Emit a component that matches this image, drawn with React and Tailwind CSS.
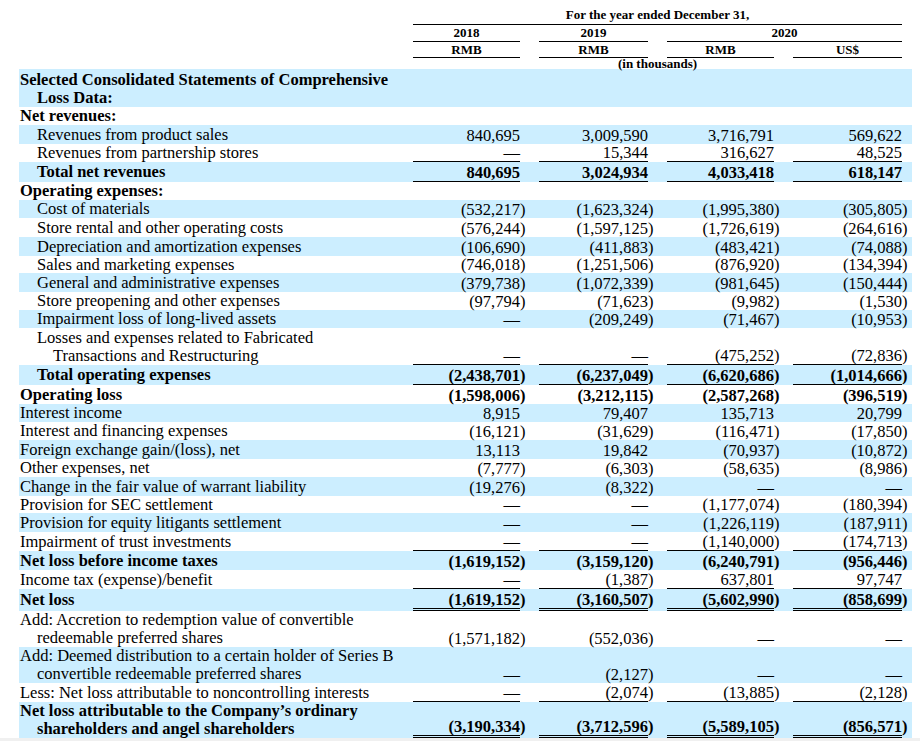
import React from "react";

const W = ["w-[107px]", "w-[109px]", "w-[107px]", "w-[109px]"];
const P = ["w-[19px]", "w-[19px]", "w-[19px]", "w-[10px]"];
const IND = ["pl-[1px]", "pl-[18px]", "pl-[34px]"];

const rows = [
  { l: [["Selected Consolidated Statements of Comprehensive", 0], ["Loss Data:", 1]], b: true, h: "h-[38px]", end: true },
  { l: [["Net revenues:", 0]], b: true, h: "h-[18px]" },
  { l: [["Revenues from product sales", 1]], h: "h-[19px]", v: ["840,695", "3,009,590", "3,716,791", "569,622"] },
  { l: [["Revenues from partnership stores", 1]], h: "h-[18px]", v: ["—", "15,344", "316,627", "48,525"], u: 1 },
  { l: [["Total net revenues", 1]], b: true, vb: true, h: "h-[20px]", v: ["840,695", "3,024,934", "4,033,418", "618,147"], u: 1 },
  { l: [["Operating expenses:", 0]], b: true, h: "h-[18px]" },
  { l: [["Cost of materials", 1]], h: "h-[18px]", v: ["(532,217)", "(1,623,324)", "(1,995,380)", "(305,805)"] },
  { l: [["Store rental and other operating costs", 1]], h: "h-[19px]", v: ["(576,244)", "(1,597,125)", "(1,726,619)", "(264,616)"] },
  { l: [["Depreciation and amortization expenses", 1]], h: "h-[19px]", v: ["(106,690)", "(411,883)", "(483,421)", "(74,088)"] },
  { l: [["Sales and marketing expenses", 1]], h: "h-[17px]", v: ["(746,018)", "(1,251,506)", "(876,920)", "(134,394)"] },
  { l: [["General and administrative expenses", 1]], h: "h-[19px]", v: ["(379,738)", "(1,072,339)", "(981,645)", "(150,444)"] },
  { l: [["Store preopening and other expenses", 1]], h: "h-[18px]", v: ["(97,794)", "(71,623)", "(9,982)", "(1,530)"] },
  { l: [["Impairment loss of long-lived assets", 1]], h: "h-[18px]", v: ["—", "(209,249)", "(71,467)", "(10,953)"] },
  { l: [["Losses and expenses related to Fabricated", 1], ["Transactions and Restructuring", 2]], h: "h-[37px]", v: ["—", "—", "(475,252)", "(72,836)"], u: 1 },
  { l: [["Total operating expenses", 1]], b: true, vb: true, h: "h-[20px]", v: ["(2,438,701)", "(6,237,049)", "(6,620,686)", "(1,014,666)"], u: 1 },
  { l: [["Operating loss", 0]], b: true, vb: true, h: "h-[19px]", v: ["(1,598,006)", "(3,212,115)", "(2,587,268)", "(396,519)"] },
  { l: [["Interest income", 0]], h: "h-[18px]", v: ["8,915", "79,407", "135,713", "20,799"] },
  { l: [["Interest and financing expenses", 0]], h: "h-[18px]", v: ["(16,121)", "(31,629)", "(116,471)", "(17,850)"] },
  { l: [["Foreign exchange gain/(loss), net", 0]], h: "h-[19px]", v: ["13,113", "19,842", "(70,937)", "(10,872)"] },
  { l: [["Other expenses, net", 0]], h: "h-[18px]", v: ["(7,777)", "(6,303)", "(58,635)", "(8,986)"] },
  { l: [["Change in the fair value of warrant liability", 0]], h: "h-[19px]", v: ["(19,276)", "(8,322)", "—", "—"] },
  { l: [["Provision for SEC settlement", 0]], h: "h-[17px]", v: ["—", "—", "(1,177,074)", "(180,394)"] },
  { l: [["Provision for equity litigants settlement", 0]], h: "h-[19px]", v: ["—", "—", "(1,226,119)", "(187,911)"] },
  { l: [["Impairment of trust investments", 0]], h: "h-[19px]", v: ["—", "—", "(1,140,000)", "(174,713)"], u: 1 },
  { l: [["Net loss before income taxes", 0]], b: true, vb: true, h: "h-[19px]", v: ["(1,619,152)", "(3,159,120)", "(6,240,791)", "(956,446)"] },
  { l: [["Income tax (expense)/benefit", 0]], h: "h-[19px]", v: ["—", "(1,387)", "637,801", "97,747"], u: 1 },
  { l: [["Net loss", 0]], b: true, vb: true, h: "h-[22px]", v: ["(1,619,152)", "(3,160,507)", "(5,602,990)", "(858,699)"], u: 2 },
  { l: [["Add: Accretion to redemption value of convertible", 0], ["redeemable preferred shares", 1]], h: "h-[36px]", v: ["(1,571,182)", "(552,036)", "—", "—"] },
  { l: [["Add: Deemed distribution to a certain holder of Series B", 0], ["convertible redeemable preferred shares", 1]], h: "h-[36px]", v: ["—", "(2,127)", "—", "—"] },
  { l: [["Less: Net loss attributable to noncontrolling interests", 0]], h: "h-[19px]", v: ["—", "(2,074)", "(13,885)", "(2,128)"], u: 1 },
  { l: [["Net loss attributable to the Company’s ordinary", 0], ["shareholders and angel shareholders", 1]], b: true, vb: true, h: "h-[36px]", v: ["(3,190,334)", "(3,712,596)", "(5,589,105)", "(856,571)"], u: 2 },
];

function Row({ r, shaded }) {
  const line = r.u === 1 ? "border-b border-black" : r.u === 2 ? "border-b-[3px] border-double border-black" : "";
  const lineT = r.u === 1 ? "border-b border-transparent" : r.u === 2 ? "border-b-[3px] border-transparent" : "";
  return (
    <div className={`flex ${r.h} ${shaded ? "bg-[#cceeff]" : ""}`}>
      <div className={`w-[394px] flex flex-col ${r.end ? "justify-end" : "justify-center"} ${r.b ? "font-bold" : ""}`}>
        {r.l.map(([t, i], k) => (
          <div key={k} className={`${IND[i]} leading-[18px] whitespace-nowrap`}>{t}</div>
        ))}
      </div>
      {[0, 1, 2, 3].map((c) => {
        const raw = r.v ? r.v[c] : "";
        const neg = raw.endsWith(")");
        const num = neg ? raw.slice(0, -1) : raw;
        return (
          <React.Fragment key={c}>
            <div className={`${W[c]} flex items-end justify-end ${r.v ? line : ""} ${r.vb ? "font-bold" : ""}`}>
              <span className="leading-[17px] whitespace-nowrap">{num}</span>
            </div>
            <div className={`${P[c]} flex items-end ${r.v ? lineT : ""} ${r.vb ? "font-bold" : ""}`}>
              <span className="leading-[17px]">{neg ? ")" : ""}</span>
            </div>
          </React.Fragment>
        );
      })}
    </div>
  );
}

export default function App() {
  return (
    <div className="w-[920px] h-[741px] bg-white text-black overflow-hidden" style={{ fontFamily: '"Liberation Serif", "Times New Roman", serif' }}>
      <div className="ml-[19px] w-[893px] text-[13px] font-bold">
        <div className="flex h-[25px]">
          <div className="w-[394px]" />
          <div className="w-[489px] flex items-end justify-center border-b border-black pb-[1px] leading-[16px]">For the year ended December 31,</div>
        </div>
        <div className="flex h-[17px]">
          <div className="w-[394px]" />
          <div className="w-[107px] flex items-end justify-center border-b border-black leading-[16px]">2018</div>
          <div className="w-[19px]" />
          <div className="w-[109px] flex items-end justify-center border-b border-black leading-[16px]">2019</div>
          <div className="w-[19px]" />
          <div className="w-[235px] flex items-end justify-center border-b border-black leading-[16px]">2020</div>
        </div>
        <div className="flex h-[16px]">
          <div className="w-[394px]" />
          <div className="w-[107px] flex items-end justify-center border-b border-black leading-[15px]">RMB</div>
          <div className="w-[19px]" />
          <div className="w-[109px] flex items-end justify-center border-b border-black leading-[15px]">RMB</div>
          <div className="w-[19px]" />
          <div className="w-[107px] flex items-end justify-center border-b border-black leading-[15px]">RMB</div>
          <div className="w-[19px]" />
          <div className="w-[109px] flex items-end justify-center border-b border-black leading-[15px]">US$</div>
        </div>
        <div className="flex h-[11px]">
          <div className="w-[394px]" />
          <div className="w-[489px] flex items-center justify-center leading-[11px]">(in thousands)</div>
        </div>
      </div>
      <div className="ml-[19px] w-[893px] text-[16.5px]">
        {rows.map((r, i) => (
          <Row key={i} r={r} shaded={i % 2 === 0} />
        ))}
      </div>
      <div className="h-[3px] bg-[#f0f0f0]" />
    </div>
  );
}
